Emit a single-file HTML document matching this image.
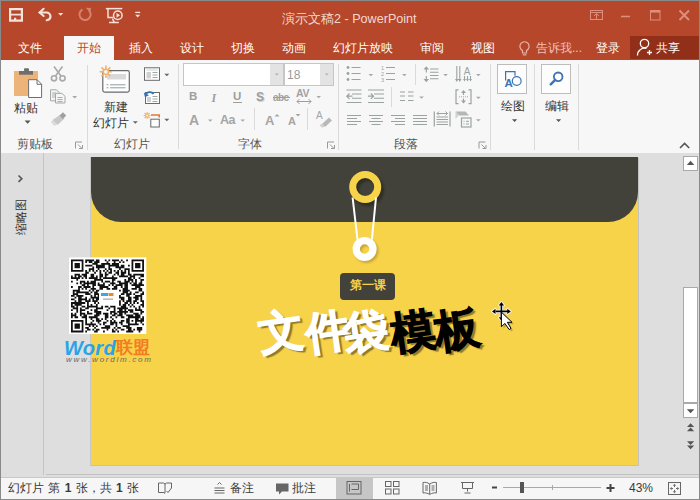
<!DOCTYPE html>
<html><head><meta charset="utf-8">
<style>
*{margin:0;padding:0;box-sizing:border-box}
html,body{width:700px;height:500px;overflow:hidden;background:#8a8a8a}
body{position:relative;font-family:"Liberation Sans",sans-serif;}
.a{position:absolute}
.t{position:absolute;white-space:nowrap;line-height:1}
svg{position:absolute;overflow:visible}
#title{left:1px;top:1px;width:698px;height:59px;background:#B7472A}
#ribbon{left:1px;top:60px;width:698px;height:93px;background:#F7F7F7}
#main{left:1px;top:153px;width:698px;height:324px;background:#DEDEDE}
#status{left:1px;top:478px;width:698px;height:21px;background:#F6F6F6}
.tab{color:#fff;font-size:12px;top:42px;font-weight:500}
.lbl{color:#333;font-size:12px;font-weight:500}
.sep{position:absolute;width:1px;background:#DADADA}
</style></head><body>
<div id="title" class="a"></div>
<div id="ribbon" class="a"></div>
<div id="main" class="a"></div>
<div class="a" style="left:1px;top:477px;width:698px;height:1px;background:#C8C8C8"></div>
<div id="status" class="a"></div>

<!-- title bar -->
<svg style="left:0;top:0" width="700" height="60">
 <!-- save -->
 <path d="M9 8h14v13.7h-14z M11.2 10.2v3.6h9.6v-3.6z M11.2 15.6v4h2.8v-1.8h2.2v1.8h4.6v-4z" fill="#F4E3DC" fill-rule="evenodd"/>
 <!-- undo -->
 <g fill="none" stroke="#F4E3DC" stroke-width="2.1" stroke-linecap="round">
  <path d="M39.5 12.5h6.5a4 4 0 0 1 4.5 4 q0 3 -3.8 3.8"/>
  <path d="M43.6 8.8l-3.9 3.7 3.9 3.5"/>
 </g>
 <path d="M58 13.1h5.3l-2.65 2.7z" fill="#F4E3DC"/>
 <!-- redo grey -->
 <g fill="none" stroke="#D6826D" stroke-width="2">
  <path d="M89 10.5a5.6 5.6 0 1 1 -6.5 -1"/>
 </g>
 <path d="M85.8 7.8l5.3 0.2 -1 4.8z" fill="#D6826D"/>
 <!-- start from beginning -->
 <g fill="none" stroke="#F4E3DC" stroke-width="1.5">
  <path d="M105.8 8.6h16.5"/>
  <path d="M108 9v8.6h5.2"/>
  <circle cx="117.8" cy="15.3" r="4.3"/>
  <path d="M109 22.6h9.8M112.5 18.6l1.8 3.8"/>
 </g>
 <path d="M116.5 12.9v4.8l3.6-2.4z" fill="#F4E3DC"/>
 <path d="M135.2 12.4h5" stroke="#F4E3DC" stroke-width="1.3"/>
 <path d="M135.2 14.8h5l-2.5 2.7z" fill="#F4E3DC"/>
 <!-- window controls -->
 <g fill="none" stroke="#DB8F7C" stroke-width="1">
  <rect x="590.5" y="10.5" width="12" height="9"/>
  <path d="M590.5 12.5h12" />
  <path d="M596.5 19v-5M594 16l2.5-2.5 2.5 2.5"/>
  <path d="M621 16.5h9" stroke-width="1.6"/>
  <rect x="650.5" y="10.5" width="9.5" height="9.5"/>
  <path d="M650.5 11.8h9.5" stroke-width="1.6"/>
  <path d="M679.5 10.5l9.5 9.5M689 10.5l-9.5 9.5" stroke-width="2"/>
 </g>
</svg>
<div class="t" style="left:282px;top:12.5px;font-size:12.6px;color:#F4D9D1">演示文稿2 - PowerPoint</div>
<!-- tabs -->
<div class="a" style="left:64px;top:36px;width:50px;height:24px;background:#F7F7F7"></div>
<div class="t tab" style="left:18px">文件</div>
<div class="t tab" style="left:77px;color:#B7472A">开始</div>
<div class="t tab" style="left:129px">插入</div>
<div class="t tab" style="left:180px">设计</div>
<div class="t tab" style="left:231px">切换</div>
<div class="t tab" style="left:282px">动画</div>
<div class="t tab" style="left:333px">幻灯片放映</div>
<div class="t tab" style="left:420px">审阅</div>
<div class="t tab" style="left:471px">视图</div>
<svg style="left:0;top:0" width="700" height="60">
 <g fill="none" stroke="#E9B3A5" stroke-width="1.2">
  <path d="M522.5 50.5a4.6 4.6 0 1 1 4 0v2.5h-4z"/>
  <path d="M522.8 54.8h3.6"/>
 </g>
</svg>
<div class="t tab" style="left:536px;color:#EFC2B6">告诉我...</div>
<div class="t tab" style="left:596px">登录</div>
<div class="a" style="left:630px;top:36px;width:69px;height:23px;background:#912F18"></div>
<svg style="left:0;top:0" width="700" height="60">
 <g fill="none" stroke="#fff" stroke-width="1.3">
  <circle cx="644.5" cy="43.5" r="4.2"/>
  <path d="M637.5 55.5a7 7 0 0 1 9 -7"/>
  <path d="M647 52.5h5M649.5 50v5"/>
 </g>
</svg>
<div class="t tab" style="left:656px">共享</div>

<!-- slide -->
<div class="a" id="slide" style="left:91px;top:157px;width:547px;height:308px;background:#F7D349;overflow:hidden">
  <div class="a" style="left:0;top:0;width:547px;height:65px;background:#43423A;border-radius:0 0 30px 30px"></div>
</div>

<!-- ribbon -->
<div class="sep" style="left:87px;top:65px;height:85px"></div>
<div class="sep" style="left:178px;top:64px;height:85px"></div>
<div class="sep" style="left:338px;top:64px;height:86px"></div>
<div class="sep" style="left:490px;top:64px;height:86px"></div>
<div class="sep" style="left:534px;top:64px;height:86px"></div>
<div class="sep" style="left:578px;top:64px;height:86px"></div>
<div class="sep" style="left:254px;top:108px;height:22px"></div>
<div class="sep" style="left:307px;top:108px;height:22px"></div>
<div class="sep" style="left:415px;top:64px;height:21px"></div>
<div class="sep" style="left:391px;top:87px;height:20px"></div>
<div class="t lbl" style="left:14px;top:101.5px">粘贴</div>
<div class="t lbl" style="left:17px;top:138px;color:#555">剪贴板</div>
<div class="t lbl" style="left:104px;top:101px">新建</div>
<div class="t lbl" style="left:93px;top:117px">幻灯片</div>
<div class="t lbl" style="left:114px;top:137.5px;color:#555">幻灯片</div>
<div class="t lbl" style="left:238px;top:138px;color:#555">字体</div>
<div class="t lbl" style="left:394px;top:138px;color:#555">段落</div>
<div class="t lbl" style="left:501px;top:100px">绘图</div>
<div class="t lbl" style="left:545px;top:100px">编辑</div>
<svg style="left:0;top:0" width="700" height="160">
 <!-- paste -->
 <rect x="14" y="71" width="24" height="25" fill="#EDB47A"/>
 <rect x="19" y="71" width="14" height="3.7" fill="#6E6E6E"/>
 <rect x="24" y="68.3" width="5" height="3" rx="1" fill="#6E6E6E"/>
 <path d="M28.6 79.7h8.5l4.5 4.5v13.3h-13z" fill="#fff" stroke="#6E6E6E" stroke-width="1"/>
 <path d="M37 80v4.3h4.3" fill="none" stroke="#6E6E6E" stroke-width="1"/>
 <path d="M24.6 120.5h6l-3 3.2z" fill="#555"/>
 <!-- cut -->
 <g fill="none" stroke="#A9A9A9" stroke-width="1.6">
  <circle cx="54" cy="78.3" r="2.6"/><circle cx="62.5" cy="78.3" r="2.6"/>
  <path d="M55.5 76l7-9.5M61 76l-7-9.5"/>
 </g>
 <!-- copy -->
 <g fill="#F5F5F5" stroke="#A2A8A6" stroke-width="1">
  <path d="M50.5 89.8h6l2.5 2.5v8.5h-8.5z"/>
  <path d="M55.5 93.3h6.5l3 3v6.7h-9.5z"/>
 </g>
 <path d="M52 93h4M52 95h3M52 97h3M57.5 97.5h5M57.5 99.5h5M57.5 101.5h5" stroke="#A2A8A6" stroke-width="0.9"/>
 <path d="M72.2 96h5l-2.5 2.6z" fill="#A8A8A8"/>
 <!-- format painter -->
 <path d="M60.5 114.5l4 4-7 6.5-5-5z" fill="#C8C8C8"/>
 <path d="M59.5 115.5l3.5-3.2 3.2 3.2-3.3 3.4z" fill="#A0A0A0"/>
 <path d="M52.5 120l4.5 4.5-2.5 1.5-3.5-3.5z" fill="#DADADA"/>
 <!-- dialog launchers -->
 <g fill="none" stroke="#999" stroke-width="1">
  <path d="M75.5 148.5v-6.5h6.5M78 144.5l4 4M79 148.5h3.5v-3.5"/>
  <path d="M327.5 148.5v-6.5h6.5M330 144.5l4 4M331 148.5h3.5v-3.5"/>
  <path d="M479 148.5v-6.5h6.5M481.5 144.5l4 4M482.5 148.5h3.5v-3.5"/>
 </g>
</svg>

<svg style="left:0;top:0" width="700" height="160">
 <!-- new slide -->
 <rect x="102.8" y="70.6" width="26.5" height="21.5" rx="1.8" fill="#fff" stroke="#6A6A6A" stroke-width="1.2"/>
 <rect x="107" y="74" width="19" height="5.5" fill="#D9D9D9"/>
 <path d="M106.5 84.8h2M110 84.8h15.5M106.5 87.8h2M110 87.8h15.5" stroke="#8E9E9E" stroke-width="1"/>
 <g stroke="#EFB26A" stroke-width="1.6">
  <path d="M105.9 65.5v12.6M99.6 71.8h12.6M101.5 67.4l8.8 8.8M110.3 67.4l-8.8 8.8"/>
 </g>
 <circle cx="105.9" cy="71.8" r="2.6" fill="#F5F5F5" stroke="#EFB26A" stroke-width="1.4"/>
 <path d="M132.8 121.3h5l-2.5 2.5z" fill="#666"/>
 <!-- layout -->
 <rect x="144.5" y="67.8" width="15" height="12.5" fill="#fff" stroke="#6A6A6A" stroke-width="1"/>
 <path d="M146.5 70h11" stroke="#D0D0D0" stroke-width="1"/>
 <rect x="146.5" y="72" width="4.5" height="6.5" fill="#D0D0D0"/>
 <path d="M152.5 72.5h5M152.5 75h5M152.5 77.5h5" stroke="#8E9E9E" stroke-width="0.9"/>
 <path d="M164.3 73.8h5l-2.5 2.5z" fill="#666"/>
 <!-- reset -->
 <rect x="145.5" y="92.5" width="14" height="11" fill="#fff" stroke="#6A6A6A" stroke-width="1"/>
 <rect x="147" y="97" width="4" height="5" fill="#D0D0D0"/>
 <path d="M152.5 96.5h5M152.5 99h5M152.5 101.5h5" stroke="#8E9E9E" stroke-width="0.9"/>
 <path d="M145.5 95.5a4.5 4.5 0 0 1 8 -1.5" fill="none" stroke="#2E75B6" stroke-width="1.8"/>
 <path d="M143.8 92.5l1.2 4.8 4-2z" fill="#2E75B6"/>
 <!-- section -->
 <g stroke="#EFB26A" stroke-width="1.1">
  <path d="M147.1 112v7M143.6 115.5h7M144.6 113l5 5M149.6 113l-5 5"/>
 </g>
 <circle cx="147.1" cy="115.5" r="1.5" fill="#F5F5F5" stroke="#EFB26A" stroke-width="1"/>
 <path d="M151 115h8.2v2.5" fill="none" stroke="#E07B39" stroke-width="1.6"/>
 <rect x="150.8" y="119.2" width="8.5" height="7.8" fill="#fff" stroke="#6A6A6A" stroke-width="1"/>
 <path d="M164.3 118.8h5l-2.5 2.5z" fill="#666"/>
</svg>

<!-- font group -->
<div class="a" style="left:183px;top:63px;width:101px;height:23px;background:#fff;border:1px solid #C6C6C6"></div>
<div class="a" style="left:270px;top:64px;width:13px;height:21px;background:#E3E3E3"></div>
<div class="a" style="left:284px;top:63px;width:50px;height:23px;background:#fff;border:1px solid #C6C6C6"></div>
<div class="a" style="left:320px;top:64px;width:13px;height:21px;background:#E3E3E3"></div>
<div class="t" style="left:287px;top:69px;font-size:12px;color:#9A9A9A">18</div>
<div class="t" style="left:189px;top:91px;font-size:11.5px;font-weight:bold;color:#9E9E9E">B</div>
<div class="t" style="left:211.5px;top:91.5px;font-size:12px;font-style:italic;font-weight:bold;font-family:'Liberation Serif',serif;color:#9E9E9E">I</div>
<div class="t" style="left:233px;top:91px;font-size:11.5px;color:#9E9E9E;font-weight:bold">U</div>
<div class="a" style="left:233px;top:102px;width:9px;height:1px;background:#9E9E9E"></div>
<div class="t" style="left:257px;top:92px;font-size:12px;font-weight:bold;color:#D0D0D0">S</div>
<div class="t" style="left:256px;top:91px;font-size:12px;font-weight:bold;color:#9E9E9E">S</div>
<div class="t" style="left:273px;top:93px;font-size:10px;font-weight:bold;color:#A3A3A3;letter-spacing:-0.6px">abc</div>
<div class="a" style="left:273px;top:97px;width:17px;height:1px;background:#9E9E9E"></div>
<div class="t" style="left:296px;top:88px;font-size:10.5px;font-weight:bold;color:#A3A3A3;letter-spacing:-0.3px">AV</div>
<div class="t" style="left:189px;top:113px;font-size:14px;font-weight:bold;color:#A5A5A5">A</div>
<div class="t" style="left:220px;top:114px;font-size:12.5px;font-weight:bold;color:#A5A5A5;letter-spacing:-0.5px">Aa</div>
<div class="t" style="left:265px;top:114px;font-size:13px;font-weight:bold;color:#A5A5A5">A</div>
<div class="t" style="left:288px;top:116px;font-size:11px;font-weight:bold;color:#A5A5A5">A</div>
<div class="t" style="left:316px;top:111px;font-size:10px;color:#A5A5A5">A</div>
<svg style="left:0;top:0" width="700" height="160">
 <path d="M274.8 73.5h4l-2 2z M324.8 73.5h4l-2 2z" fill="#B0B0B0"/>
 <path d="M297 101.5h14" stroke="#9E9E9E" stroke-width="1"/>
 <path d="M299.5 99l-2.5 2.5 2.5 2.5M308.5 99l2.5 2.5-2.5 2.5" fill="none" stroke="#9E9E9E" stroke-width="1"/>
 <path d="M316.5 96h4.5l-2.25 2.3z M208 119.5h4.5l-2.25 2.3z M240.5 119.5h4.5l-2.25 2.3z" fill="#A8A8A8"/>
 <path d="M274.5 116.5l2.5-2.5 2.5 2.5z" fill="#A5A5A5"/>
 <path d="M295.5 114h5l-2.5 2.5z" fill="#A5A5A5"/>
 <path d="M322 124l7-6.5 3 3-7 6.5z" fill="#B8B8B8"/>
 <path d="M319.5 125.5l2.5-2 2.5 2.8-2 1.5z" fill="#CFCFCF"/>
</svg>

<!-- paragraph group -->
<svg style="left:0;top:0" width="700" height="160">
 <path d="M351.5 67.5h9.0M351.5 73.5h9.0M351.5 79.5h9.0M386 67.5h9M386 73.5h9M386 79.5h9M430 69h8.5M430 72.3h8.5M430 75.5h8.5M430 78.7h8.5M346.5 90h15.0M346.5 102.5h15.0M352 94h9.5M352 98.3h9.5M368 90h16M368 102.5h16M374 94h10M374 98.3h10M400 92h5M400 96h5M400 100.5h5M408 92h5.5M408 96h5.5M408 100.5h5.5M347 115.5h14M347 121.5h14M347 118.5h10M347 124.5h10M369 115.5h14M369 121.5h14M371.5 118.5h9.0M371.5 124.5h9.0M391 115.5h14M391 121.5h14M395 118.5h10M395 124.5h10M413 115.5h14M413 118.5h14M413 121.5h14M413 124.5h14M436.5 117h11.5M436.5 119.5h11.5M436.5 122h11.5M436.5 124.5h11.5" stroke="#9AA3A2" stroke-width="1.1" fill="none"/>
 <circle cx="348" cy="67.5" r="1.4" fill="#9AA3A2"/><circle cx="348" cy="73.5" r="1.4" fill="#9AA3A2"/><circle cx="348" cy="79.5" r="1.4" fill="#9AA3A2"/>
 <text x="381" y="70" font-size="5.5" fill="#9AA3A2" font-family="Liberation Sans">1</text>
 <text x="381" y="76" font-size="5.5" fill="#9AA3A2" font-family="Liberation Sans">2</text>
 <text x="381" y="82" font-size="5.5" fill="#9AA3A2" font-family="Liberation Sans">3</text>
 <path d="M368.5 74h4.7l-2.35 2.3z M402 74h4.7l-2.35 2.3z M443.2 74h4.7l-2.35 2.3z M476 74h4.7l-2.35 2.3z M419.2 96.5h4.7l-2.35 2.3z M476 96.8h4.7l-2.35 2.3z M476 119.3h4.7l-2.35 2.3z" fill="#A8A8A8"/>
 <g fill="none" stroke="#9AA3A2" stroke-width="1.2">
  <!-- line spacing arrows -->
  <path d="M426.3 69v3.5M426.3 76v3.5"/>
  <!-- text direction -->
  <path d="M456.8 66v13M459.8 66v13M464.5 76v3.5M467.5 76v3.5M470.5 76v3.5" stroke-width="1.1"/>
  <!-- indent arrows -->
  <path d="M347 96.2h5.5M349.5 93.5l-2.7 2.7 2.7 2.7"/>
  <path d="M368 96.2h5.5M370.8 93.5l2.7 2.7-2.7 2.7"/>
  <!-- align text -->
  <path d="M458.5 89.8h-2.5v13.8h2.5M468.5 89.8h2.5v13.8h-2.5" />
  <path d="M463.5 93v2M463.5 98.5v2.5" stroke-width="1.1"/>
  <path d="M459 96.8h9" stroke-width="0.9" stroke-dasharray="1 1"/>
  <!-- distributed -->
  <path d="M434.3 111.5v15M450 111.5v15"/>
  <path d="M437 113.5h10.5M439 111.5l-2 2 2 2M445.5 111.5l2 2-2 2" stroke-width="1"/>
  <!-- smartart -->
  <rect x="461.5" y="118" width="9.5" height="9" fill="#F7F7F7"/>
  <path d="M463.5 121.3h1M466 121.3h3M463.5 124h1M466 124h3" stroke-width="1"/>
 </g>
 <path d="M455.5 111.5h10l3.5 4h-10z" fill="#B5B5B5"/>
 <path d="M455.5 111.5l3 4-3 3.5z" fill="#CFCFCF"/>
 <g fill="#9AA3A2">
  <path d="M423.5 69.5l2.8-3.3 2.8 3.3z M423.5 79l2.8 3.3 2.8-3.3z"/>
  <path d="M455 79l1.8 3 1.8-3z M458 79l1.8 3 1.8-3z M463 79l1.5 2.6 1.5-2.6z M466 79l1.5 2.6 1.5-2.6z M469 79l1.5 2.6 1.5-2.6z"/>
  <path d="M461 93l2.5-3 2.5 3z M461 100.5l2.5 3 2.5-3z"/>
 </g>
 <text x="463.8" y="74.5" font-size="10" fill="#9AA3A2" font-family="Liberation Sans">A</text>
</svg>

<!-- drawing / editing -->
<div class="a" style="left:497px;top:64px;width:30px;height:30px;background:#FDFDFD;border:1px solid #BDBDBD"></div>
<div class="a" style="left:541px;top:64px;width:30px;height:30px;background:#FDFDFD;border:1px solid #BDBDBD"></div>
<svg style="left:0;top:0" width="700" height="160">
 <path d="M505.6 80.5v-8.8h9.4v4" fill="none" stroke="#3C73B5" stroke-width="1.2"/>
 <circle cx="516.7" cy="81" r="4.4" fill="none" stroke="#3C73B5" stroke-width="1.2"/>
 <text x="504.5" y="86.8" font-size="11.5" font-weight="bold" fill="#3C73B5" font-family="Liberation Sans">A</text>
 <circle cx="558.2" cy="76.8" r="4.3" fill="none" stroke="#3C73B5" stroke-width="1.8"/>
 <path d="M555.2 79.8l-4.5 4.5" stroke="#3C73B5" stroke-width="2.4" stroke-linecap="round"/>
 <path d="M512 119.3h5.2l-2.6 2.6z M556 119.3h5.2l-2.6 2.6z" fill="#555"/>
 <path d="M680 148l4.6-4.6 4.6 4.6" fill="none" stroke="#555" stroke-width="1.6"/>
</svg>


<div class="a" style="left:90px;top:465px;width:549px;height:1px;background:#C2C2C2"></div>
<div class="a" style="left:90px;top:157px;width:1px;height:308px;background:#C8C8C8"></div>
<div class="a" style="left:638px;top:158px;width:1px;height:308px;background:#C2C2C2"></div>
<!-- slide content -->
<svg style="left:0;top:0" width="700" height="500">
 <defs>
  <filter id="sh" x="-50%" y="-50%" width="200%" height="200%"><feGaussianBlur stdDeviation="1.2"/></filter>
 </defs>
 <circle cx="368" cy="190" r="12.5" fill="none" stroke="#2F2D27" stroke-width="7" filter="url(#sh)"/>
 <circle cx="365.2" cy="187" r="12.5" fill="none" stroke="#F7D349" stroke-width="7"/>
 <path d="M352.6 197.5L357.6 240.5M376 197.5L371.8 240.5" stroke="#fff" stroke-width="2"/>
 <circle cx="366.5" cy="251" r="8.4" fill="none" stroke="#C9A63A" stroke-width="7.3" filter="url(#sh)"/>
 <circle cx="364.6" cy="249" r="8.4" fill="none" stroke="#fff" stroke-width="7.3"/>
</svg>
<div class="a" style="left:340px;top:273px;width:55px;height:27px;background:#43423A;border-radius:4px"></div>
<div class="t" style="left:350px;top:279.5px;font-size:11.5px;color:#F7D349;font-weight:bold">第一课</div>
<div class="a" id="ttl" style="left:256px;top:303px;width:240px;height:70px">
 <div class="t" style="left:3px;top:6px;font-size:45px;font-weight:900;color:#fff;-webkit-text-stroke:1px #fff;transform:rotate(-8deg);text-shadow:2px 2px 1px rgba(60,50,20,.55)">文</div>
 <div class="t" style="left:50px;top:6px;font-size:45px;font-weight:900;color:#fff;-webkit-text-stroke:1px #fff;transform:rotate(-8deg);text-shadow:2px 2px 1px rgba(60,50,20,.55)">件</div>
 <div class="t" style="left:88px;top:6px;font-size:45px;font-weight:900;color:#fff;-webkit-text-stroke:1px #fff;transform:rotate(-8deg);text-shadow:2px 2px 1px rgba(60,50,20,.55)">袋</div>
 <div class="t" style="left:135px;top:6px;font-size:45px;font-weight:900;color:#000;-webkit-text-stroke:1px #000;transform:rotate(-8deg);text-shadow:2px 2px 1px rgba(60,50,20,.55)">模</div>
 <div class="t" style="left:179px;top:4px;font-size:45px;font-weight:900;color:#000;-webkit-text-stroke:1px #000;transform:rotate(-8deg);text-shadow:2px 2px 1px rgba(60,50,20,.55)">板</div>
</div>


<!-- QR -->
<svg style="left:0;top:0" width="700" height="500">
 <rect x="69" y="257.4" width="77.3" height="76.5" fill="#fff"/>
 <path d="M71.00 259.40h12.46v1.78h-12.46zM85.24 259.40h8.90v1.78h-8.90zM95.92 259.40h3.56v1.78h-3.56zM104.82 259.40h1.78v1.78h-1.78zM108.38 259.40h1.78v1.78h-1.78zM111.94 259.40h7.12v1.78h-7.12zM120.84 259.40h1.78v1.78h-1.78zM126.18 259.40h1.78v1.78h-1.78zM131.52 259.40h12.46v1.78h-12.46zM71.00 261.18h1.78v1.78h-1.78zM81.68 261.18h1.78v1.78h-1.78zM85.24 261.18h1.78v1.78h-1.78zM88.80 261.18h3.56v1.78h-3.56zM94.14 261.18h5.34v1.78h-5.34zM106.60 261.18h1.78v1.78h-1.78zM113.72 261.18h1.78v1.78h-1.78zM119.06 261.18h1.78v1.78h-1.78zM122.62 261.18h1.78v1.78h-1.78zM131.52 261.18h1.78v1.78h-1.78zM142.20 261.18h1.78v1.78h-1.78zM71.00 262.96h1.78v1.78h-1.78zM74.56 262.96h5.34v1.78h-5.34zM81.68 262.96h1.78v1.78h-1.78zM92.36 262.96h5.34v1.78h-5.34zM101.26 262.96h8.90v1.78h-8.90zM111.94 262.96h7.12v1.78h-7.12zM131.52 262.96h1.78v1.78h-1.78zM135.08 262.96h5.34v1.78h-5.34zM142.20 262.96h1.78v1.78h-1.78zM71.00 264.74h1.78v1.78h-1.78zM74.56 264.74h5.34v1.78h-5.34zM81.68 264.74h1.78v1.78h-1.78zM85.24 264.74h7.12v1.78h-7.12zM95.92 264.74h8.90v1.78h-8.90zM108.38 264.74h10.68v1.78h-10.68zM120.84 264.74h3.56v1.78h-3.56zM127.96 264.74h1.78v1.78h-1.78zM131.52 264.74h1.78v1.78h-1.78zM135.08 264.74h5.34v1.78h-5.34zM142.20 264.74h1.78v1.78h-1.78zM71.00 266.52h1.78v1.78h-1.78zM74.56 266.52h5.34v1.78h-5.34zM81.68 266.52h1.78v1.78h-1.78zM92.36 266.52h1.78v1.78h-1.78zM95.92 266.52h8.90v1.78h-8.90zM108.38 266.52h1.78v1.78h-1.78zM115.50 266.52h8.90v1.78h-8.90zM131.52 266.52h1.78v1.78h-1.78zM135.08 266.52h5.34v1.78h-5.34zM142.20 266.52h1.78v1.78h-1.78zM71.00 268.30h1.78v1.78h-1.78zM81.68 268.30h1.78v1.78h-1.78zM88.80 268.30h5.34v1.78h-5.34zM97.70 268.30h1.78v1.78h-1.78zM104.82 268.30h1.78v1.78h-1.78zM108.38 268.30h3.56v1.78h-3.56zM119.06 268.30h1.78v1.78h-1.78zM124.40 268.30h5.34v1.78h-5.34zM131.52 268.30h1.78v1.78h-1.78zM142.20 268.30h1.78v1.78h-1.78zM71.00 270.08h12.46v1.78h-12.46zM85.24 270.08h1.78v1.78h-1.78zM88.80 270.08h1.78v1.78h-1.78zM92.36 270.08h1.78v1.78h-1.78zM95.92 270.08h1.78v1.78h-1.78zM99.48 270.08h1.78v1.78h-1.78zM103.04 270.08h1.78v1.78h-1.78zM106.60 270.08h1.78v1.78h-1.78zM110.16 270.08h1.78v1.78h-1.78zM113.72 270.08h1.78v1.78h-1.78zM117.28 270.08h1.78v1.78h-1.78zM120.84 270.08h1.78v1.78h-1.78zM124.40 270.08h1.78v1.78h-1.78zM127.96 270.08h1.78v1.78h-1.78zM131.52 270.08h12.46v1.78h-12.46zM85.24 271.86h3.56v1.78h-3.56zM94.14 271.86h1.78v1.78h-1.78zM99.48 271.86h1.78v1.78h-1.78zM104.82 271.86h1.78v1.78h-1.78zM108.38 271.86h3.56v1.78h-3.56zM115.50 271.86h3.56v1.78h-3.56zM120.84 271.86h5.34v1.78h-5.34zM127.96 271.86h1.78v1.78h-1.78zM74.56 273.64h5.34v1.78h-5.34zM81.68 273.64h5.34v1.78h-5.34zM90.58 273.64h3.56v1.78h-3.56zM99.48 273.64h3.56v1.78h-3.56zM104.82 273.64h3.56v1.78h-3.56zM113.72 273.64h1.78v1.78h-1.78zM117.28 273.64h1.78v1.78h-1.78zM120.84 273.64h3.56v1.78h-3.56zM127.96 273.64h3.56v1.78h-3.56zM133.30 273.64h10.68v1.78h-10.68zM71.00 275.42h1.78v1.78h-1.78zM74.56 275.42h1.78v1.78h-1.78zM78.12 275.42h3.56v1.78h-3.56zM83.46 275.42h3.56v1.78h-3.56zM90.58 275.42h3.56v1.78h-3.56zM95.92 275.42h1.78v1.78h-1.78zM99.48 275.42h3.56v1.78h-3.56zM104.82 275.42h1.78v1.78h-1.78zM111.94 275.42h1.78v1.78h-1.78zM119.06 275.42h8.90v1.78h-8.90zM129.74 275.42h5.34v1.78h-5.34zM140.42 275.42h3.56v1.78h-3.56zM71.00 277.20h8.90v1.78h-8.90zM81.68 277.20h1.78v1.78h-1.78zM85.24 277.20h1.78v1.78h-1.78zM88.80 277.20h8.90v1.78h-8.90zM99.48 277.20h1.78v1.78h-1.78zM103.04 277.20h14.24v1.78h-14.24zM127.96 277.20h3.56v1.78h-3.56zM133.30 277.20h1.78v1.78h-1.78zM138.64 277.20h1.78v1.78h-1.78zM76.34 278.98h1.78v1.78h-1.78zM94.14 278.98h8.90v1.78h-8.90zM111.94 278.98h3.56v1.78h-3.56zM124.40 278.98h1.78v1.78h-1.78zM127.96 278.98h5.34v1.78h-5.34zM135.08 278.98h1.78v1.78h-1.78zM140.42 278.98h3.56v1.78h-3.56zM71.00 280.76h1.78v1.78h-1.78zM79.90 280.76h5.34v1.78h-5.34zM87.02 280.76h1.78v1.78h-1.78zM90.58 280.76h5.34v1.78h-5.34zM101.26 280.76h1.78v1.78h-1.78zM104.82 280.76h5.34v1.78h-5.34zM111.94 280.76h1.78v1.78h-1.78zM117.28 280.76h3.56v1.78h-3.56zM124.40 280.76h5.34v1.78h-5.34zM131.52 280.76h1.78v1.78h-1.78zM135.08 280.76h1.78v1.78h-1.78zM140.42 280.76h1.78v1.78h-1.78zM76.34 282.54h1.78v1.78h-1.78zM79.90 282.54h1.78v1.78h-1.78zM83.46 282.54h12.46v1.78h-12.46zM97.70 282.54h1.78v1.78h-1.78zM103.04 282.54h1.78v1.78h-1.78zM110.16 282.54h5.34v1.78h-5.34zM119.06 282.54h8.90v1.78h-8.90zM129.74 282.54h1.78v1.78h-1.78zM133.30 282.54h3.56v1.78h-3.56zM138.64 282.54h3.56v1.78h-3.56zM81.68 284.32h3.56v1.78h-3.56zM87.02 284.32h1.78v1.78h-1.78zM92.36 284.32h3.56v1.78h-3.56zM97.70 284.32h7.12v1.78h-7.12zM108.38 284.32h1.78v1.78h-1.78zM111.94 284.32h1.78v1.78h-1.78zM115.50 284.32h7.12v1.78h-7.12zM124.40 284.32h3.56v1.78h-3.56zM131.52 284.32h12.46v1.78h-12.46zM71.00 286.10h1.78v1.78h-1.78zM78.12 286.10h3.56v1.78h-3.56zM83.46 286.10h7.12v1.78h-7.12zM92.36 286.10h1.78v1.78h-1.78zM99.48 286.10h8.90v1.78h-8.90zM113.72 286.10h3.56v1.78h-3.56zM120.84 286.10h1.78v1.78h-1.78zM124.40 286.10h3.56v1.78h-3.56zM135.08 286.10h5.34v1.78h-5.34zM78.12 287.88h1.78v1.78h-1.78zM81.68 287.88h1.78v1.78h-1.78zM85.24 287.88h1.78v1.78h-1.78zM90.58 287.88h5.34v1.78h-5.34zM99.48 287.88h3.56v1.78h-3.56zM106.60 287.88h3.56v1.78h-3.56zM111.94 287.88h5.34v1.78h-5.34zM122.62 287.88h5.34v1.78h-5.34zM131.52 287.88h5.34v1.78h-5.34zM138.64 287.88h3.56v1.78h-3.56zM72.78 289.66h7.12v1.78h-7.12zM88.80 289.66h1.78v1.78h-1.78zM92.36 289.66h1.78v1.78h-1.78zM95.92 289.66h3.56v1.78h-3.56zM119.06 289.66h1.78v1.78h-1.78zM122.62 289.66h7.12v1.78h-7.12zM138.64 289.66h3.56v1.78h-3.56zM72.78 291.44h1.78v1.78h-1.78zM76.34 291.44h12.46v1.78h-12.46zM90.58 291.44h1.78v1.78h-1.78zM94.14 291.44h3.56v1.78h-3.56zM122.62 291.44h5.34v1.78h-5.34zM129.74 291.44h1.78v1.78h-1.78zM135.08 291.44h3.56v1.78h-3.56zM142.20 291.44h1.78v1.78h-1.78zM72.78 293.22h5.34v1.78h-5.34zM85.24 293.22h5.34v1.78h-5.34zM94.14 293.22h5.34v1.78h-5.34zM120.84 293.22h3.56v1.78h-3.56zM126.18 293.22h5.34v1.78h-5.34zM133.30 293.22h1.78v1.78h-1.78zM140.42 293.22h3.56v1.78h-3.56zM71.00 295.00h3.56v1.78h-3.56zM76.34 295.00h7.12v1.78h-7.12zM90.58 295.00h1.78v1.78h-1.78zM94.14 295.00h1.78v1.78h-1.78zM97.70 295.00h1.78v1.78h-1.78zM119.06 295.00h1.78v1.78h-1.78zM126.18 295.00h3.56v1.78h-3.56zM135.08 295.00h7.12v1.78h-7.12zM74.56 296.78h1.78v1.78h-1.78zM78.12 296.78h3.56v1.78h-3.56zM85.24 296.78h1.78v1.78h-1.78zM90.58 296.78h8.90v1.78h-8.90zM119.06 296.78h5.34v1.78h-5.34zM127.96 296.78h3.56v1.78h-3.56zM133.30 296.78h5.34v1.78h-5.34zM140.42 296.78h1.78v1.78h-1.78zM71.00 298.56h3.56v1.78h-3.56zM78.12 298.56h8.90v1.78h-8.90zM88.80 298.56h1.78v1.78h-1.78zM92.36 298.56h1.78v1.78h-1.78zM95.92 298.56h3.56v1.78h-3.56zM120.84 298.56h3.56v1.78h-3.56zM127.96 298.56h3.56v1.78h-3.56zM135.08 298.56h3.56v1.78h-3.56zM140.42 298.56h1.78v1.78h-1.78zM74.56 300.34h1.78v1.78h-1.78zM78.12 300.34h3.56v1.78h-3.56zM85.24 300.34h5.34v1.78h-5.34zM92.36 300.34h5.34v1.78h-5.34zM119.06 300.34h1.78v1.78h-1.78zM122.62 300.34h1.78v1.78h-1.78zM126.18 300.34h5.34v1.78h-5.34zM133.30 300.34h3.56v1.78h-3.56zM140.42 300.34h3.56v1.78h-3.56zM71.00 302.12h14.24v1.78h-14.24zM87.02 302.12h1.78v1.78h-1.78zM94.14 302.12h1.78v1.78h-1.78zM97.70 302.12h1.78v1.78h-1.78zM119.06 302.12h1.78v1.78h-1.78zM124.40 302.12h3.56v1.78h-3.56zM129.74 302.12h1.78v1.78h-1.78zM133.30 302.12h1.78v1.78h-1.78zM136.86 302.12h1.78v1.78h-1.78zM142.20 302.12h1.78v1.78h-1.78zM71.00 303.90h1.78v1.78h-1.78zM74.56 303.90h7.12v1.78h-7.12zM87.02 303.90h1.78v1.78h-1.78zM90.58 303.90h1.78v1.78h-1.78zM95.92 303.90h1.78v1.78h-1.78zM119.06 303.90h1.78v1.78h-1.78zM122.62 303.90h3.56v1.78h-3.56zM127.96 303.90h1.78v1.78h-1.78zM131.52 303.90h1.78v1.78h-1.78zM140.42 303.90h3.56v1.78h-3.56zM71.00 305.68h3.56v1.78h-3.56zM76.34 305.68h1.78v1.78h-1.78zM81.68 305.68h3.56v1.78h-3.56zM87.02 305.68h10.68v1.78h-10.68zM101.26 305.68h1.78v1.78h-1.78zM104.82 305.68h3.56v1.78h-3.56zM110.16 305.68h5.34v1.78h-5.34zM120.84 305.68h5.34v1.78h-5.34zM129.74 305.68h1.78v1.78h-1.78zM133.30 305.68h1.78v1.78h-1.78zM138.64 305.68h1.78v1.78h-1.78zM142.20 305.68h1.78v1.78h-1.78zM72.78 307.46h5.34v1.78h-5.34zM79.90 307.46h1.78v1.78h-1.78zM85.24 307.46h3.56v1.78h-3.56zM95.92 307.46h7.12v1.78h-7.12zM108.38 307.46h1.78v1.78h-1.78zM113.72 307.46h1.78v1.78h-1.78zM117.28 307.46h10.68v1.78h-10.68zM135.08 307.46h1.78v1.78h-1.78zM138.64 307.46h1.78v1.78h-1.78zM71.00 309.24h1.78v1.78h-1.78zM76.34 309.24h1.78v1.78h-1.78zM79.90 309.24h5.34v1.78h-5.34zM90.58 309.24h1.78v1.78h-1.78zM94.14 309.24h3.56v1.78h-3.56zM106.60 309.24h1.78v1.78h-1.78zM113.72 309.24h1.78v1.78h-1.78zM119.06 309.24h3.56v1.78h-3.56zM124.40 309.24h1.78v1.78h-1.78zM127.96 309.24h5.34v1.78h-5.34zM135.08 309.24h7.12v1.78h-7.12zM76.34 311.02h1.78v1.78h-1.78zM79.90 311.02h1.78v1.78h-1.78zM87.02 311.02h1.78v1.78h-1.78zM94.14 311.02h7.12v1.78h-7.12zM110.16 311.02h5.34v1.78h-5.34zM117.28 311.02h10.68v1.78h-10.68zM129.74 311.02h3.56v1.78h-3.56zM140.42 311.02h3.56v1.78h-3.56zM71.00 312.80h1.78v1.78h-1.78zM74.56 312.80h1.78v1.78h-1.78zM79.90 312.80h5.34v1.78h-5.34zM87.02 312.80h5.34v1.78h-5.34zM95.92 312.80h5.34v1.78h-5.34zM103.04 312.80h5.34v1.78h-5.34zM110.16 312.80h1.78v1.78h-1.78zM113.72 312.80h3.56v1.78h-3.56zM119.06 312.80h3.56v1.78h-3.56zM124.40 312.80h1.78v1.78h-1.78zM133.30 312.80h5.34v1.78h-5.34zM140.42 312.80h1.78v1.78h-1.78zM71.00 314.58h5.34v1.78h-5.34zM79.90 314.58h1.78v1.78h-1.78zM83.46 314.58h3.56v1.78h-3.56zM94.14 314.58h5.34v1.78h-5.34zM104.82 314.58h3.56v1.78h-3.56zM111.94 314.58h3.56v1.78h-3.56zM117.28 314.58h5.34v1.78h-5.34zM126.18 314.58h7.12v1.78h-7.12zM135.08 314.58h5.34v1.78h-5.34zM71.00 316.36h1.78v1.78h-1.78zM74.56 316.36h3.56v1.78h-3.56zM81.68 316.36h5.34v1.78h-5.34zM88.80 316.36h8.90v1.78h-8.90zM104.82 316.36h3.56v1.78h-3.56zM110.16 316.36h1.78v1.78h-1.78zM115.50 316.36h1.78v1.78h-1.78zM120.84 316.36h3.56v1.78h-3.56zM127.96 316.36h12.46v1.78h-12.46zM142.20 316.36h1.78v1.78h-1.78zM85.24 318.14h1.78v1.78h-1.78zM90.58 318.14h1.78v1.78h-1.78zM95.92 318.14h3.56v1.78h-3.56zM101.26 318.14h1.78v1.78h-1.78zM104.82 318.14h1.78v1.78h-1.78zM111.94 318.14h1.78v1.78h-1.78zM126.18 318.14h3.56v1.78h-3.56zM135.08 318.14h3.56v1.78h-3.56zM140.42 318.14h3.56v1.78h-3.56zM71.00 319.92h12.46v1.78h-12.46zM85.24 319.92h1.78v1.78h-1.78zM92.36 319.92h1.78v1.78h-1.78zM95.92 319.92h5.34v1.78h-5.34zM106.60 319.92h1.78v1.78h-1.78zM110.16 319.92h1.78v1.78h-1.78zM113.72 319.92h1.78v1.78h-1.78zM120.84 319.92h3.56v1.78h-3.56zM126.18 319.92h3.56v1.78h-3.56zM131.52 319.92h1.78v1.78h-1.78zM135.08 319.92h8.90v1.78h-8.90zM71.00 321.70h1.78v1.78h-1.78zM81.68 321.70h1.78v1.78h-1.78zM85.24 321.70h1.78v1.78h-1.78zM90.58 321.70h1.78v1.78h-1.78zM97.70 321.70h1.78v1.78h-1.78zM103.04 321.70h3.56v1.78h-3.56zM110.16 321.70h7.12v1.78h-7.12zM119.06 321.70h3.56v1.78h-3.56zM126.18 321.70h3.56v1.78h-3.56zM135.08 321.70h1.78v1.78h-1.78zM140.42 321.70h1.78v1.78h-1.78zM71.00 323.48h1.78v1.78h-1.78zM74.56 323.48h5.34v1.78h-5.34zM81.68 323.48h1.78v1.78h-1.78zM85.24 323.48h10.68v1.78h-10.68zM99.48 323.48h1.78v1.78h-1.78zM103.04 323.48h1.78v1.78h-1.78zM110.16 323.48h3.56v1.78h-3.56zM115.50 323.48h1.78v1.78h-1.78zM120.84 323.48h1.78v1.78h-1.78zM127.96 323.48h10.68v1.78h-10.68zM142.20 323.48h1.78v1.78h-1.78zM71.00 325.26h1.78v1.78h-1.78zM74.56 325.26h5.34v1.78h-5.34zM81.68 325.26h1.78v1.78h-1.78zM88.80 325.26h1.78v1.78h-1.78zM92.36 325.26h1.78v1.78h-1.78zM95.92 325.26h1.78v1.78h-1.78zM104.82 325.26h5.34v1.78h-5.34zM115.50 325.26h1.78v1.78h-1.78zM122.62 325.26h7.12v1.78h-7.12zM71.00 327.04h1.78v1.78h-1.78zM74.56 327.04h5.34v1.78h-5.34zM81.68 327.04h1.78v1.78h-1.78zM85.24 327.04h3.56v1.78h-3.56zM94.14 327.04h1.78v1.78h-1.78zM101.26 327.04h8.90v1.78h-8.90zM113.72 327.04h1.78v1.78h-1.78zM117.28 327.04h3.56v1.78h-3.56zM126.18 327.04h5.34v1.78h-5.34zM136.86 327.04h5.34v1.78h-5.34zM71.00 328.82h1.78v1.78h-1.78zM81.68 328.82h1.78v1.78h-1.78zM87.02 328.82h3.56v1.78h-3.56zM92.36 328.82h1.78v1.78h-1.78zM95.92 328.82h3.56v1.78h-3.56zM106.60 328.82h1.78v1.78h-1.78zM111.94 328.82h1.78v1.78h-1.78zM115.50 328.82h1.78v1.78h-1.78zM120.84 328.82h3.56v1.78h-3.56zM127.96 328.82h3.56v1.78h-3.56zM133.30 328.82h1.78v1.78h-1.78zM136.86 328.82h5.34v1.78h-5.34zM71.00 330.60h12.46v1.78h-12.46zM85.24 330.60h1.78v1.78h-1.78zM94.14 330.60h3.56v1.78h-3.56zM103.04 330.60h1.78v1.78h-1.78zM111.94 330.60h3.56v1.78h-3.56zM117.28 330.60h1.78v1.78h-1.78zM126.18 330.60h7.12v1.78h-7.12zM138.64 330.60h1.78v1.78h-1.78z" fill="#111"/>
 <rect x="99" y="290.5" width="18" height="13" fill="#fff"/>
 <rect x="101" y="293" width="7" height="3" fill="#3AA7E8"/><rect x="108.5" y="293" width="5" height="3" fill="#F3862B"/>
 <rect x="103" y="298.5" width="10" height="1.3" fill="#AAA"/>
</svg>
<div class="t" style="left:64px;top:337.5px;font-size:20px;font-weight:bold;font-style:italic;color:#2BA3E8;letter-spacing:0.3px">Word</div>
<div class="t" style="left:115.5px;top:338.5px;font-size:16.5px;font-weight:bold;color:#F47B22;letter-spacing:0px">联盟</div>
<div class="t" style="left:66px;top:355.5px;font-size:8px;font-style:italic;color:#666;letter-spacing:1.75px">www.wordlm.com</div>
<!-- cursor -->
<svg style="left:0;top:0" width="700" height="500">
 <g transform="translate(2,2)" fill="#9C8530" opacity=".55">
  <path d="M501.4 312.2v14.6l3.4-3.4 4.4 6.2 1.8-1.3-3.7-6h4.8z"/>
 </g>
 <path d="M498.70 305.50L501.40 302.00 504.10 305.50z M500.60 305.20h1.60v12.40h-1.60z M495.50 308.70L492.00 311.40 495.50 314.10z M495.20 310.60h12.40v1.60h-12.40z M507.30 308.70L510.80 311.40 507.30 314.10z M498.70 317.30L501.40 320.80 504.10 317.30z" fill="#fff" stroke="#fff" stroke-width="1.6" stroke-linejoin="round"/>
 <path d="M498.70 305.50L501.40 302.00 504.10 305.50z M500.60 305.20h1.60v12.40h-1.60z M495.50 308.70L492.00 311.40 495.50 314.10z M495.20 310.60h12.40v1.60h-12.40z M507.30 308.70L510.80 311.40 507.30 314.10z M498.70 317.30L501.40 320.80 504.10 317.30z" fill="#000"/>
 <path d="M501.4 312.2v14.6l3.4-3.4 4.4 6.2 1.8-1.3-3.7-6h4.8z" fill="#fff" stroke="#000" stroke-width="1" stroke-linejoin="miter"/>
</svg>

<!-- main area pane -->
<div class="a" style="left:43px;top:153px;width:1px;height:322px;background:#C4C4C4"></div>
<div class="a" style="left:46px;top:474px;width:653px;height:1px;background:#C2C2C2"></div>
<svg style="left:0;top:0" width="700" height="500">
 <path d="M18.5 175.5l3.3 3.2-3.3 3.2" fill="none" stroke="#555" stroke-width="1.6"/>
 <!-- scrollbar -->
 <rect x="683.5" y="156.5" width="14" height="14" fill="#fff" stroke="#A5ABAB" stroke-width="1"/>
 <path d="M686.8 165h7.5l-3.75-4.2z" fill="#555"/>
 <rect x="683.5" y="287.5" width="14" height="115" fill="#fff" stroke="#A5ABAB" stroke-width="1"/>
 <rect x="683.5" y="403.5" width="14" height="14" fill="#fff" stroke="#A5ABAB" stroke-width="1"/>
 <path d="M686.8 409.3h7.5l-3.75 4z" fill="#555"/>
 <path d="M687 427l3.6-3.8 3.6 3.8z M687 431.2l3.6-3.8 3.6 3.8z" fill="#555"/>
 <path d="M687 441.2l3.6 3.8 3.6-3.8z M687 445.4l3.6 3.8 3.6-3.8z" fill="#555"/>
</svg>
<div class="a" style="left:2px;top:199px;width:38px;height:36px">
 <div class="t" style="left:19px;top:18px;font-size:12px;color:#333;font-weight:500;transform:translate(-50%,-50%) rotate(-90deg)">缩略图</div>
</div>
<!-- status bar -->
<div class="t" style="left:8px;top:482px;font-size:12px;color:#3A3A3A;font-weight:500;word-spacing:1px">幻灯片 第 <b>1</b> 张，共 <b>1</b> 张</div>
<div class="t" style="left:230px;top:482px;font-size:12px;color:#3A3A3A;font-weight:500">备注</div>
<div class="t" style="left:292px;top:482px;font-size:12px;color:#3A3A3A;font-weight:500">批注</div>
<div class="t" style="left:629px;top:482px;font-size:12px;color:#3A3A3A;font-weight:500">43%</div>
<div class="a" style="left:336px;top:478px;width:37px;height:21px;background:#C6C6C6"></div>
<svg style="left:0;top:0" width="700" height="500">
 <g fill="none" stroke="#666" stroke-width="1">
  <!-- spell -->
  <path d="M158.5 483v9.5h5.5M165 484l-1.5-1h-5M165 484v9M163.5 492.5l1.5 1"/>
  <path d="M165 484l1.5-1h5v5"/>
  <path d="M166.5 491l1.5 1.5 3.5-4.5"/>
  <!-- notes -->
  <path d="M217.5 484.5l2-2 2 2M214.5 488h10M214.5 490.5h10M214.5 493h10"/>
  <!-- views -->
  <rect x="347" y="481.5" width="14" height="12.5"/>
  <path d="M349.5 484v7.5M351.5 484h7v5.5h-7"/>
  <rect x="385.5" y="481.5" width="5.5" height="5"/><rect x="393.5" y="481.5" width="5.5" height="5"/>
  <rect x="385.5" y="489" width="5.5" height="5"/><rect x="393.5" y="489" width="5.5" height="5"/>
  <path d="M423 482.5c2 -0.5 4.5 0 6.7 1.5c2.2 -1.5 4.7 -2 6.7 -1.5v10.5c-2 -0.5 -4.5 0 -6.7 1.5c-2.2 -1.5 -4.7 -2 -6.7 -1.5z M429.7 484v10"/>
  <path d="M425 486h3M425 488h3M425 490h3M431.5 486h3M431.5 488h3M431.5 490h3"/>
  <path d="M461 482.5h13M462.5 483v5.5h10v-5.5M467.5 488.5v3M464.5 493h6"/>
  <!-- fit -->
  <rect x="668.5" y="482.5" width="12" height="12"/>
 </g>
 <path d="M276 483.5h12.5v8h-6.5l-3 3v-3h-3z" fill="#666"/>
 <path d="M492 487.5h5" stroke="#444" stroke-width="2"/>
 <path d="M503 487.5h98" stroke="#A9A9A9" stroke-width="1"/>
 <path d="M552.5 485v5" stroke="#A9A9A9" stroke-width="1"/>
 <rect x="520" y="482" width="4" height="11" fill="#555"/>
 <path d="M606.5 488h8M610.5 484v8" stroke="#444" stroke-width="2"/>
 <g fill="#666">
  <path d="M674.5 483.8l-1.6 2h3.2z M674.5 493.2l-1.6 -2h3.2z M669.8 488.5l2 -1.6v3.2z M679.2 488.5l-2 -1.6v3.2z"/>
  <path d="M674 485.5h1v1.5h-1z M674 490h1v1.5h-1z M671.5 488h1.5v1h-1.5z M676 488h1.5v1h-1.5z"/>
 </g>
</svg>
</body></html>
